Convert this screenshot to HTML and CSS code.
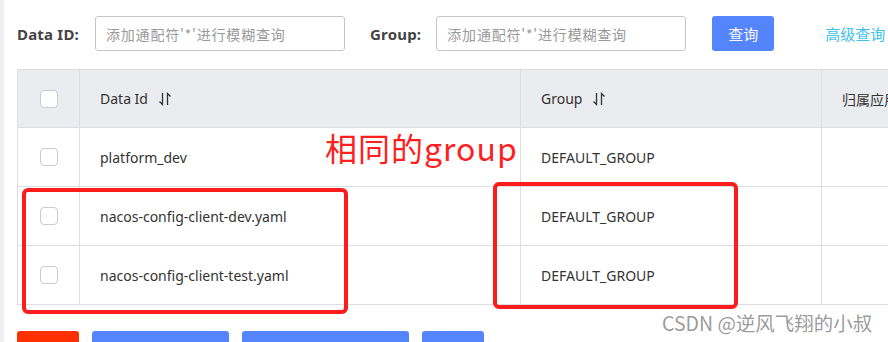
FILE: index.html
```html
<!DOCTYPE html>
<html lang="zh-CN">
<head>
<meta charset="utf-8">
<title>配置列表</title>
<link rel="stylesheet" href="styles.css">
</head>
<body>
<div class="page">
  <div class="strip"></div>
  <div class="main">
    <div class="filters">
      <label class="flabel">Data ID:</label>
      <input class="finput" type="text" placeholder="添加通配符'*'进行模糊查询">
      <label class="flabel group-label">Group:</label>
      <input class="finput" type="text" placeholder="添加通配符'*'进行模糊查询">
      <button class="btn-query">查询</button>
      <a class="adv">高级查询</a>
    </div>

    <div class="table-wrap">
      <div class="table">
        <div class="row head">
          <div class="cell chk"><span class="box"></span></div>
          <div class="cell">Data Id <svg class="sort" width="14" height="14" viewBox="0 0 14 14"><path d="M4.5 1 V12.5 L1.5 9.5" fill="none" stroke="#333" stroke-width="1.3"/><path d="M9.5 13 V1.5 L12.5 4.5" fill="none" stroke="#333" stroke-width="1.3"/></svg></div>
          <div class="cell">Group <svg class="sort" width="14" height="14" viewBox="0 0 14 14"><path d="M4.5 1 V12.5 L1.5 9.5" fill="none" stroke="#333" stroke-width="1.3"/><path d="M9.5 13 V1.5 L12.5 4.5" fill="none" stroke="#333" stroke-width="1.3"/></svg></div>
          <div class="cell">归属应用</div>
        </div>
        <div class="row">
          <div class="cell chk"><span class="box"></span></div>
          <div class="cell">platform_dev</div>
          <div class="cell">DEFAULT_GROUP</div>
          <div class="cell"></div>
        </div>
        <div class="row">
          <div class="cell chk"><span class="box"></span></div>
          <div class="cell">nacos-config-client-dev.yaml</div>
          <div class="cell">DEFAULT_GROUP</div>
          <div class="cell"></div>
        </div>
        <div class="row">
          <div class="cell chk"><span class="box"></span></div>
          <div class="cell">nacos-config-client-test.yaml</div>
          <div class="cell">DEFAULT_GROUP</div>
          <div class="cell"></div>
        </div>
      </div>
      <div class="note">相同的group</div>
      <div class="mark mark-id"></div>
      <div class="mark mark-group"></div>
    </div>

    <div class="actions">
      <span class="abtn red w62"></span>
      <span class="abtn blue w137"></span>
      <span class="abtn blue w167"></span>
      <span class="abtn blue w62"></span>
    </div>
    <div class="watermark">CSDN @逆风飞翔的小叔</div>
  </div>
</div>
</body>
</html>
```

FILE: styles.css
```css
html, body {
  margin: 0;
  padding: 0;
  background: #fff;
  overflow: hidden;
}
body {
  font-family: "Noto Sans", "Noto Sans CJK SC", sans-serif;
  color: #333;
  font-size: 14px;
}
.page {
  display: flex;
  width: 888px;
  height: 342px;
  overflow: hidden;
}
.strip {
  width: 4px;
  flex: none;
  background: #eef0f4;
}
.main {
  position: relative;
  flex: 1;
  padding: 16px 0 0 13px;
  overflow: hidden;
}
.filters {
  display: flex;
  align-items: center;
  height: 35px;
  white-space: nowrap;
}
.flabel {
  font-family: "Noto Sans", "Noto Sans CJK SC", sans-serif;
  font-weight: 700;
  font-size: 15px;
  letter-spacing: 0.2px;
  color: #444;
  margin-right: 16px;
}
.group-label {
  margin-left: 25px;
  margin-right: 15px;
}
.finput {
  box-sizing: border-box;
  width: 250px;
  height: 35px;
  border: 1px solid #c4c6cf;
  border-radius: 3px;
  padding: 0 10px;
  font-family: "Noto Sans CJK SC", sans-serif;
  font-size: 14px;
  letter-spacing: 0.8px;
  outline: none;
}
.finput::placeholder {
  color: #999;
}
.btn-query {
  margin-left: 26px;
  width: 62px;
  height: 35px;
  border: none;
  border-radius: 3px;
  background: #5584ff;
  color: #fff;
  font-family: "Noto Sans CJK SC", sans-serif;
  font-size: 15px;
  padding: 0;
}
.adv {
  margin-left: 51px;
  color: #3cc2ea;
  font-family: "Noto Sans CJK SC", sans-serif;
  font-size: 15px;
}
.table-wrap {
  position: relative;
  margin-top: 18px;
  width: 1000px;
}
.table {
  border-left: 1px solid #dcdee3;
  border-top: 1px solid #dcdee3;
}
.row {
  display: grid;
  grid-template-columns: 62px 441px 301px 1fr;
  height: 59px;
  border-bottom: 1px solid #dcdee3;
  box-sizing: border-box;
}
.row.head {
  background: #ebecf0;
  height: 58px;
}
.cell {
  display: flex;
  align-items: center;
  padding-left: 20px;
  border-right: 1px solid #dcdee3;
  white-space: nowrap;
  color: #333;
}
.cell.chk {
  justify-content: center;
  padding-left: 0;
}
.box {
  width: 18px;
  height: 18px;
  box-sizing: border-box;
  border: 1px solid #c9cbd2;
  border-radius: 4px;
  background: #fff;
}
.sort {
  margin-left: 10px;
}
.note {
  position: absolute;
  left: 308px;
  top: 58px;
  font-family: "Noto Sans CJK SC", sans-serif;
  font-size: 32px;
  line-height: 40px;
  letter-spacing: 1px;
  color: #ff1f1f;
  white-space: nowrap;
}
.mark {
  position: absolute;
  box-sizing: border-box;
  border: 4px solid #fb1d1d;
  border-radius: 6px;
}
.mark-id {
  left: 5px;
  top: 119px;
  width: 326px;
  height: 126px;
}
.mark-group {
  left: 476px;
  top: 113px;
  width: 245px;
  height: 127px;
}
.actions {
  display: flex;
  gap: 13px;
  margin-top: 26px;
}
.abtn {
  height: 30px;
  border-radius: 3px;
}
.red { background: #ff3000; }
.blue { background: #5584ff; }
.w62 { width: 62px; }
.w137 { width: 137px; }
.w167 { width: 167px; }
.watermark {
  position: absolute;
  left: 658px;
  top: 311px;
  font-family: "Noto Sans CJK SC", sans-serif;
  font-size: 19.5px;
  line-height: 24px;
  color: rgba(110,110,110,0.7);
  white-space: nowrap;
}
```
